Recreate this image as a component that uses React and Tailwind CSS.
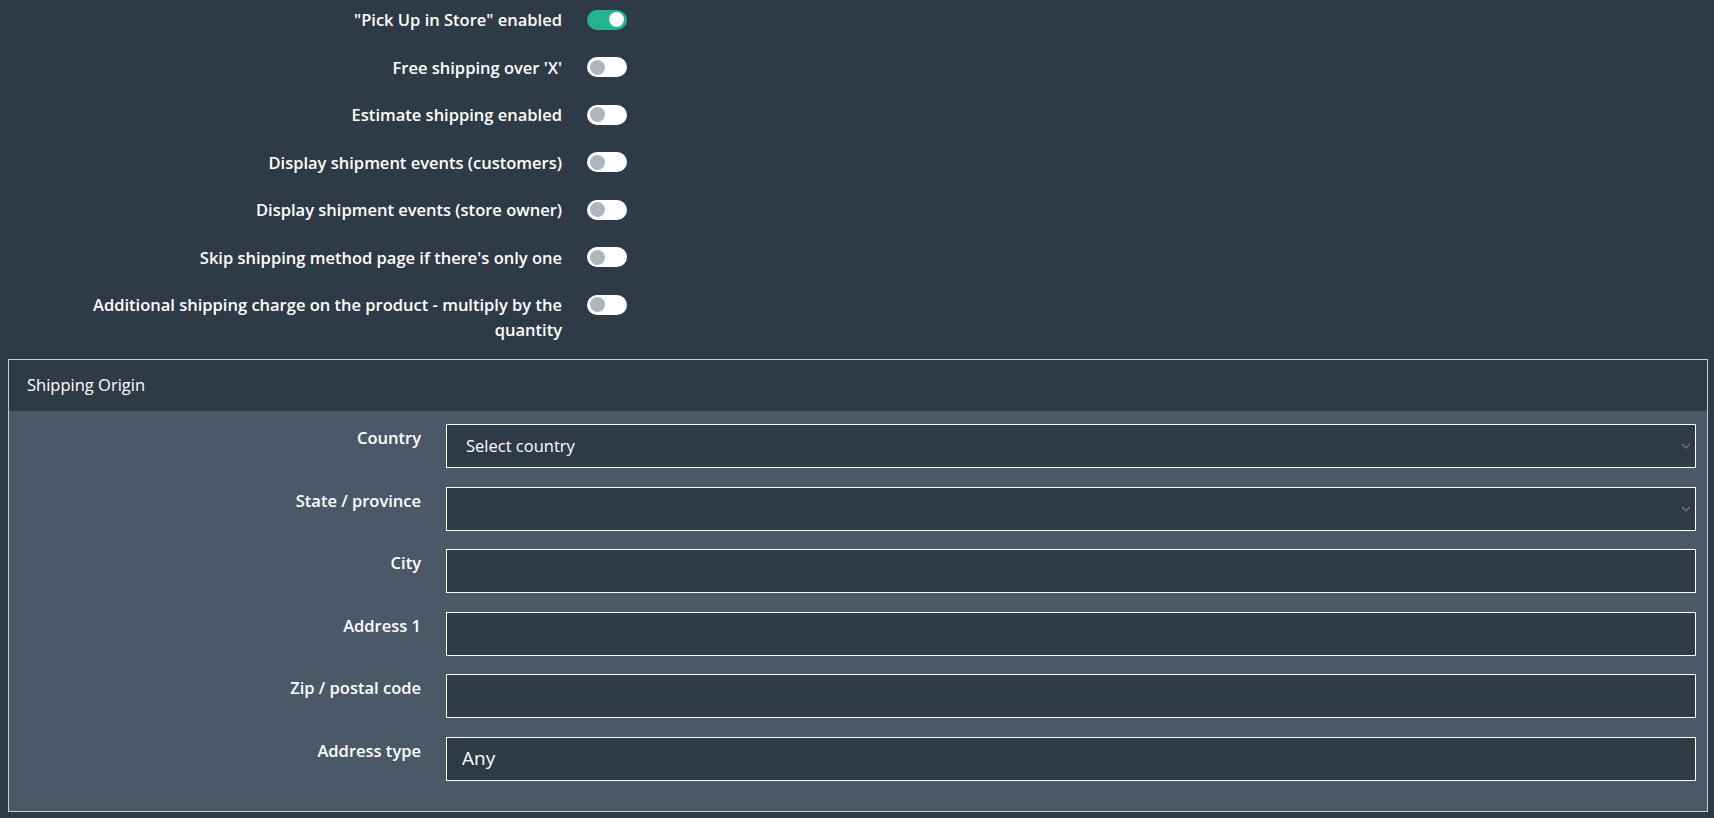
import { useState } from 'react'

const toggles = [
  { label: '"Pick Up in Store" enabled', on: true },
  { label: "Free shipping over 'X'", on: false },
  { label: 'Estimate shipping enabled', on: false },
  { label: 'Display shipment events (customers)', on: false },
  { label: 'Display shipment events (store owner)', on: false },
  { label: "Skip shipping method page if there's only one", on: false },
  { label: 'Additional shipping charge on the product - multiply by the quantity', on: false }
]

function Switch({ on, onClick }) {
  return (
    <button
      type="button"
      onClick={onClick}
      className={`mt-[2.5px] flex h-[20px] w-[40px] shrink-0 items-center rounded-full px-[3px] ${on ? 'justify-end bg-[#22b38f]' : 'justify-start bg-white'}`}
    >
      <span className={`block h-[15px] w-[15px] rounded-full ${on ? 'bg-white' : 'bg-[#adb5bd]'}`} />
    </button>
  )
}

function Chevron() {
  return (
    <svg width="10" height="6" viewBox="0 0 10 6" className="absolute right-[4px] top-1/2 -translate-y-1/2">
      <path d="M1 1l4 4 4-4" fill="none" stroke="#6b7680" strokeWidth="1.4" />
    </svg>
  )
}

function Field({ label, children }) {
  return (
    <div className="flex items-start gap-[25px]">
      <label className="w-[412px] shrink-0 pt-[1px] text-right text-[16.5px] font-semibold leading-[25px] text-white">{label}</label>
      <div className="relative h-[44px] flex-1 border border-white bg-[#2f3a47]">{children}</div>
    </div>
  )
}

export default function App() {
  const [state, setState] = useState(toggles.map((t) => t.on))

  function flip(i) {
    setState((prev) => prev.map((v, j) => (j === i ? !v : v)))
  }

  return (
    <div className="min-h-[818px] bg-[#2f3a47] pt-[7px] font-['Open_Sans',sans-serif] text-white">
      <div className="flex flex-col gap-[22.5px]">
        {toggles.map((t, i) => (
          <div key={t.label} className="flex items-start gap-[25px]">
            <div className="w-[562px] shrink-0 pl-[26px] text-right text-[16.5px] font-semibold leading-[25px]">{t.label}</div>
            <Switch on={state[i]} onClick={() => flip(i)} />
          </div>
        ))}
      </div>

      <div className="ml-[8px] mr-[6px] mt-[17px] border border-[#c9cdd2]">
        <div className="flex h-[51px] items-center bg-[#2f3a47] px-[18px] text-[16.5px]">Shipping Origin</div>
        <div className="flex flex-col gap-[18.5px] bg-[#4a5867] pb-[30px] pr-[11px] pt-[13px]">
          <Field label="Country">
            <div className="flex h-full items-center pl-[19px] text-[16.5px]">Select country</div>
            <Chevron />
          </Field>
          <Field label="State / province">
            <Chevron />
          </Field>
          <Field label="City" />
          <Field label="Address 1" />
          <Field label="Zip / postal code" />
          <Field label="Address type">
            <div className="flex h-full items-center pl-[15px] text-[19px]">Any</div>
          </Field>
        </div>
      </div>
    </div>
  )
}
